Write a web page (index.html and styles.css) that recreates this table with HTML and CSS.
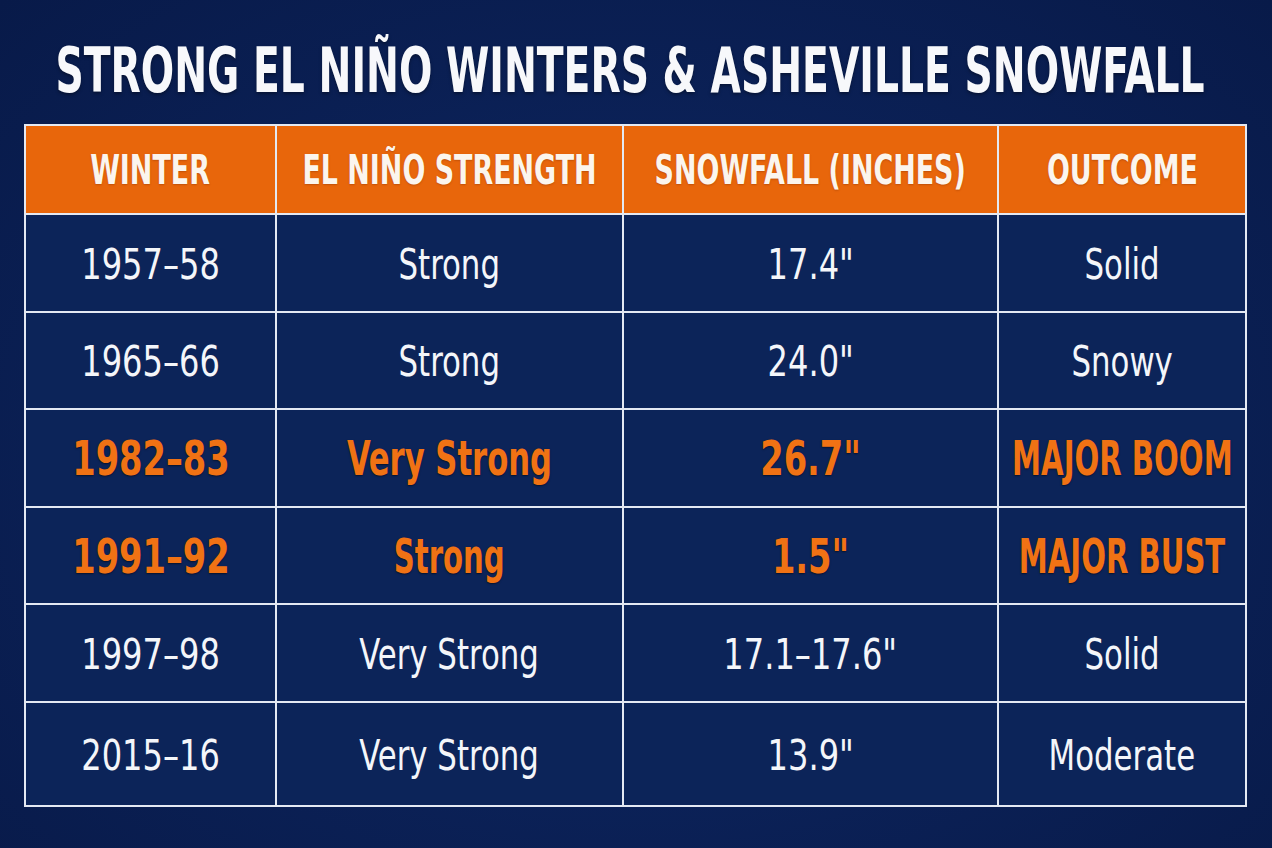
FILE: index.html
```html
<!DOCTYPE html>
<html>
<head>
<meta charset="utf-8">
<link rel="stylesheet" href="styles.css">
</head>
<body>
<div class="page">
  <h1 class="title"><span class="sq">STRONG EL NIÑO WINTERS &amp; ASHEVILLE SNOWFALL</span></h1>
  <div class="grid">
    <div class="cell head"><span class="sq">WINTER</span></div>
    <div class="cell head"><span class="sq">EL NIÑO STRENGTH</span></div>
    <div class="cell head"><span class="sq">SNOWFALL (INCHES)</span></div>
    <div class="cell head"><span class="sq">OUTCOME</span></div>

    <div class="cell"><span class="sq">1957–58</span></div>
    <div class="cell"><span class="sq w">Strong</span></div>
    <div class="cell"><span class="sq">17.4"</span></div>
    <div class="cell"><span class="sq w">Solid</span></div>

    <div class="cell"><span class="sq">1965–66</span></div>
    <div class="cell"><span class="sq w">Strong</span></div>
    <div class="cell"><span class="sq">24.0"</span></div>
    <div class="cell"><span class="sq w">Snowy</span></div>

    <div class="cell hot"><span class="sq">1982–83</span></div>
    <div class="cell hot"><span class="sq w wide">Very Strong</span></div>
    <div class="cell hot"><span class="sq">26.7"</span></div>
    <div class="cell hot"><span class="sq w">MAJOR BOOM</span></div>

    <div class="cell hot"><span class="sq">1991–92</span></div>
    <div class="cell hot"><span class="sq w">Strong</span></div>
    <div class="cell hot"><span class="sq">1.5"</span></div>
    <div class="cell hot"><span class="sq w">MAJOR BUST</span></div>

    <div class="cell"><span class="sq">1997–98</span></div>
    <div class="cell"><span class="sq w">Very Strong</span></div>
    <div class="cell"><span class="sq">17.1–17.6"</span></div>
    <div class="cell"><span class="sq w">Solid</span></div>

    <div class="cell"><span class="sq">2015–16</span></div>
    <div class="cell"><span class="sq w">Very Strong</span></div>
    <div class="cell"><span class="sq">13.9"</span></div>
    <div class="cell"><span class="sq w">Moderate</span></div>
  </div>
</div>
</body>
</html>
```

FILE: styles.css
```css
html, body {
  margin: 0;
  padding: 0;
}
body {
  width: 1272px;
  height: 848px;
  overflow: hidden;
  background: radial-gradient(ellipse at 50% 55%, #0e2763 0%, #0b2157 50%, #081a49 100%);
  font-family: "DejaVu Sans Condensed", "DejaVu Sans", sans-serif;
  color: #ffffff;
}
.page {
  padding-top: 39px;
  padding-left: 24px;
}
.sq {
  display: inline-block;
  white-space: nowrap;
  transform-origin: 50% 50%;
}
.title {
  margin: 0 0 21px -30px;
  width: 1272px;
  height: 64px;
  display: flex;
  justify-content: center;
  font-size: 63px;
  line-height: 64px;
  font-weight: 700;
  color: #f7f8fb;
  text-shadow: 0 2px 4px rgba(0, 0, 0, 0.35);
}
.title .sq {
  transform: scaleX(0.693);
}
.grid {
  display: grid;
  width: 1223px;
  box-sizing: border-box;
  padding: 2px;
  gap: 2px;
  background: #e4e9f3;
  grid-template-columns: 249px 345px 373px 246px;
  grid-template-rows: 87px 96px 95px 96px 95px 96px 102px;
}
.cell {
  background: #0c2459;
  display: flex;
  align-items: center;
  justify-content: center;
  overflow: visible;
  font-size: 42px;
  line-height: 48px;
  font-weight: 400;
  color: #f4f6fa;
  padding-top: 3px;
  box-sizing: border-box;
}
.cell .sq {
  transform: scaleX(0.85);
}
.cell .sq.w {
  transform: scaleX(0.815);
}
.cell.head {
  background: #e8660b;
  font-size: 41px;
  font-weight: 700;
  color: #fbf5ee;
  padding-top: 0;
  text-shadow: 0 1px 2px rgba(120, 40, 0, 0.35);
}
.cell.head .sq {
  transform: scaleX(0.73);
}
.cell.hot {
  font-size: 48px;
  font-weight: 700;
  color: #f07214;
  padding-top: 0;
  text-shadow: 0 1px 2px rgba(0, 0, 0, 0.5);
}
.cell.hot .sq {
  transform: scaleX(0.78);
}
.cell.hot .sq.w {
  transform: scaleX(0.675);
}
.cell.hot .sq.wide {
  transform: scaleX(0.71);
}
```
